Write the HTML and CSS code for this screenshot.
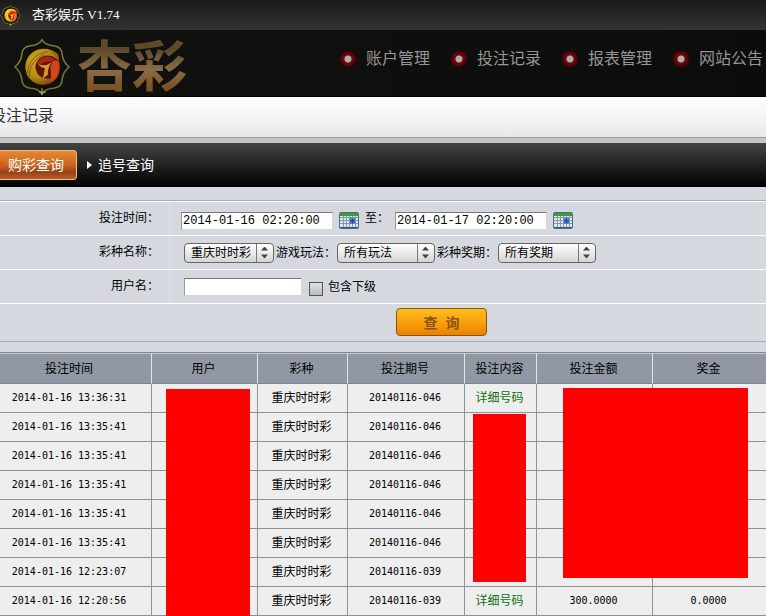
FILE: index.html
```html
<!DOCTYPE html>
<html lang="zh-CN">
<head>
  <meta charset="UTF-8" />
  <meta name="viewport" content="width=device-width, initial-scale=1.0" />
  <title>杏彩娱乐 V1.74</title>
  <link rel="stylesheet" href="styles.css">
</head>
<body>
  <svg class="defs" width="0" height="0" aria-hidden="true">
    <defs>
      <radialGradient id="gold" cx="35%" cy="35%" r="75%">
        <stop offset="0" stop-color="#d0a81c" />
        <stop offset="0.6" stop-color="#b08a14" />
        <stop offset="1" stop-color="#7a3608" />
      </radialGradient>
      <linearGradient id="frame" x1="0" y1="0" x2="0" y2="1">
        <stop offset="0" stop-color="#7d7a40" />
        <stop offset="1" stop-color="#6e7040" />
      </linearGradient>
      <symbol id="emblem" viewBox="0 0 60 60">
        <path d="M30 2 Q34 8 42 8 Q51 9 51 18 Q52 25 58 30 Q52 35 51 42 Q51 51 42 52 Q34 52 30 58 Q26 52 18 52 Q9 51 9 42 Q8 35 2 30 Q8 25 9 18 Q9 9 18 8 Q26 8 30 2Z" fill="#11110a" stroke="url(#frame)" stroke-width="1.6" />
        <circle cx="31" cy="30" r="18" fill="#5c1408" />
        <path d="M47 17 C38 8 21 9 15 21 C8 35 19 51 34 48 C41 47 45 43 46 39 C38 45 26 42 24 34 C21 25 28 18 36 18 C41 18 45 21 48 25Z" fill="url(#gold)" />
        <path d="M15 36 C15 26 23 16 36 14 M17 40 C16 30 23 20 33 17" fill="none" stroke="#6e4a0c" stroke-width="0.8" />
        <path d="M24 26 C29 19 39 17 43 22 C40 25 36 25 32 25 C30 27 27 28 24 26Z" fill="#a8260c" />
        <path d="M41 24 C46 21 49 26 48 32 C48 39 43 44 38 45 C41 39 38 34 39 29Z" fill="#d0481a" />
        <path d="M26 27 Q33 30 40 25 Q36 30 36 38 L31 42 L33 31 Q29 31 26 27Z" fill="#d89a24" />
        <path d="M30 52 V59 M27 56 H34" stroke="#c0b278" stroke-width="1" />
      </symbol>
      <symbol id="calendar" viewBox="0 0 20 17">
        <rect x="0.5" y="0.5" width="19" height="16" rx="1" fill="#dfe7ef" stroke="#4f6d84" />
        <rect x="1" y="1" width="18" height="3" fill="#3f9a35" />
        <path d="M1 5.5H19M1 8.5H19M1 11.5H19M4.500 4V15M7.500 4V15M10.500 4V15M13.500 4V15M16.500 4V15" stroke="#8499ab" />
        <path d="M11 6H16V12H11Z" fill="#4f7ccc" />
        <path d="M11 9H16M13.500 7V11" stroke="#173e96" />
        <path d="M1 15.500H19" stroke="#345b73" />
      </symbol>
    </defs>
  </svg>

  <div class="titlebar">
    <svg class="titlebar-icon" aria-hidden="true"><use href="#emblem" /></svg>
    <span>杏彩娱乐 V1.74</span>
  </div>

  <header class="header">
    <div class="logo">
      <svg class="logo-icon" aria-hidden="true"><use href="#emblem" /></svg>
      <span class="logo-text">杏彩</span>
    </div>
    <nav class="nav">
      <a href="#">账户管理</a>
      <a href="#">投注记录</a>
      <a href="#">报表管理</a>
      <a href="#">网站公告</a>
    </nav>
  </header>

  <h1 class="page-title">投注记录</h1>

  <div class="tabs">
    <a href="#" class="tab active">购彩查询</a>
    <a href="#" class="tab">追号查询</a>
  </div>

  <form class="search">
    <div class="row">
      <label class="name" for="start">投注时间：</label>
      <div class="fields dates">
        <input class="date" type="text" id="start" value="2014-01-16 02:20:00" />
        <svg class="calendar" aria-hidden="true"><use href="#calendar" /></svg>
        <label class="to" for="end">至：</label>
        <input class="date" type="text" id="end" value="2014-01-17 02:20:00" />
        <svg class="calendar" aria-hidden="true"><use href="#calendar" /></svg>
      </div>
    </div>
    <div class="row">
      <label class="name" for="lottery">彩种名称：</label>
      <div class="fields">
        <span class="select short"><select id="lottery"><option>重庆时时彩</option></select></span>
        <label class="inline" for="method">游戏玩法：</label>
        <span class="select"><select id="method"><option>所有玩法</option></select></span>
        <label class="inline" for="issue">彩种奖期：</label>
        <span class="select"><select id="issue"><option>所有奖期</option></select></span>
      </div>
    </div>
    <div class="row">
      <label class="name" for="username">用户名：</label>
      <div class="fields">
        <input class="username" type="text" id="username" />
        <input class="check" type="checkbox" id="sub" />
        <label for="sub">包含下级</label>
      </div>
    </div>
    <div class="actions">
      <button type="submit" class="submit-btn">查&nbsp;&nbsp;询</button>
    </div>
  </form>

  <table class="records">
    <colgroup>
      <col class="col-time"><col class="col-user"><col class="col-lottery"><col class="col-issue"><col class="col-detail"><col class="col-amount"><col>
    </colgroup>
    <thead>
      <tr><th>投注时间</th><th>用户</th><th>彩种</th><th>投注期号</th><th>投注内容</th><th>投注金额</th><th>奖金</th></tr>
    </thead>
    <tbody>
      <tr>
        <td class="num">2014-01-16 13:36:31</td>
        <td class="covered"><span class="mask mask-user"></span></td>
        <td>重庆时时彩</td>
        <td class="num">20140116-046</td>
        <td><a href="#">详细号码</a></td>
        <td class="covered"><span class="mask mask-amount"></span></td>
        <td></td>
      </tr>
      <tr>
        <td class="num">2014-01-16 13:35:41</td>
        <td></td>
        <td>重庆时时彩</td>
        <td class="num">20140116-046</td>
        <td class="covered"><span class="mask mask-detail"></span></td>
        <td></td>
        <td></td>
      </tr>
      <tr><td class="num">2014-01-16 13:35:41</td><td></td><td>重庆时时彩</td><td class="num">20140116-046</td><td></td><td></td><td></td></tr>
      <tr><td class="num">2014-01-16 13:35:41</td><td></td><td>重庆时时彩</td><td class="num">20140116-046</td><td></td><td></td><td></td></tr>
      <tr><td class="num">2014-01-16 13:35:41</td><td></td><td>重庆时时彩</td><td class="num">20140116-046</td><td></td><td></td><td></td></tr>
      <tr><td class="num">2014-01-16 13:35:41</td><td></td><td>重庆时时彩</td><td class="num">20140116-046</td><td></td><td></td><td></td></tr>
      <tr><td class="num">2014-01-16 12:23:07</td><td></td><td>重庆时时彩</td><td class="num">20140116-039</td><td></td><td></td><td></td></tr>
      <tr>
        <td class="num">2014-01-16 12:20:56</td>
        <td></td>
        <td>重庆时时彩</td>
        <td class="num">20140116-039</td>
        <td><a href="#">详细号码</a></td>
        <td class="num">300.0000</td>
        <td class="num">0.0000</td>
      </tr>
    </tbody>
  </table>
</body>
</html>
```

FILE: styles.css
```css
* {
  box-sizing: border-box;
}

body {
  margin: 0;
  background-color: #d5d8df;
  color: #000;
  font-family: "Liberation Sans", "Noto Sans CJK SC", sans-serif;
  font-size: 12px;
  line-height: 16px;
  overflow-x: hidden;
}

a {
  text-decoration: none;
}

.defs {
  display: block;
}

.titlebar {
  display: flex;
  align-items: center;
  gap: 11px;
  height: 30px;
  background: linear-gradient(#1a1a1a, #333);
  color: #fff;
  font-family: "Liberation Serif", "Noto Sans CJK SC", serif;
  font-size: 13px;
}

.titlebar-icon {
  width: 21px;
  height: 21px;
  filter: brightness(1.4);
}

.header {
  display: flex;
  justify-content: space-between;
  align-items: center;
  height: 67px;
  padding: 0 3px 0 12px;
  background: linear-gradient(90deg, #11110f, #0c0c0c);
  border-bottom: 1px solid #000;
}

.logo {
  display: flex;
  align-items: center;
  gap: 5px;
  padding-top: 8px;
}

.logo-icon {
  width: 60px;
  height: 58px;
}

.logo-text {
  font-size: 55px;
  font-weight: bold;
  line-height: 58px;
  background: linear-gradient(#5c4a2a 20%, #8c6b47 55%, #7a5424 85%);
  background-clip: text;
  -webkit-background-clip: text;
  color: transparent;
}

.nav {
  display: flex;
  gap: 20px;
  padding-bottom: 8px;
}

.nav a {
  display: flex;
  align-items: center;
  gap: 9px;
  color: #969696;
  font-size: 16px;
  line-height: 20px;
  white-space: nowrap;
}

.nav a::before {
  content: "";
  width: 18px;
  height: 18px;
  border-radius: 50%;
  background: radial-gradient(circle, #b8a8a8 0 3px, #6e0a10 4px, #4d0508 7px, #1c0606 9px);
}

.page-title {
  height: 41px;
  margin: 0 0 0 -10px;
  padding-top: 9px;
  background: linear-gradient(#fff, #e8e8e8);
  border-bottom: 1px solid #999;
  color: #333;
  font-size: 16px;
  font-weight: normal;
  line-height: 20px;
}

.tabs {
  display: flex;
  align-items: center;
  gap: 10px;
  height: 49px;
  border-top: 5px solid #c6c6c6;
  background: linear-gradient(#444, #000);
}

.tab {
  display: flex;
  align-items: center;
  gap: 6px;
  color: #fff;
  font-size: 14px;
  line-height: 20px;
}

.tab::before {
  content: "";
  border: 4px solid transparent;
  border-left: 5px solid #fff;
  border-right: 0;
}

.tab.active {
  height: 30px;
  padding-right: 12px;
  gap: 3px;
  border: 1px solid #f5bd80;
  border-left: 0;
  border-radius: 0 4px 4px 0;
  background: linear-gradient(#e58a30, #c96620 50%, #97431a 75%, #b85c20);
}

.tab.active::before {
  border-left-color: #e2501a;
}

.search {
  margin: 13px 0 10px;
  border-top: 1px solid #a5acb7;
  border-bottom: 1px solid #a5acb7;
}

.row {
  display: flex;
  height: 34px;
  border-top: 1px solid #fff;
}

.name {
  width: 172px;
  padding: 8px 9px 0 0;
  border-right: 4px solid #d9dbe3;
  text-align: right;
}

.fields {
  display: flex;
  align-items: center;
  padding-left: 12px;
  white-space: nowrap;
}

.dates {
  padding: 4px 0 0 9px;
}

.search input[type="text"] {
  height: 18px;
  margin: 0;
  padding: 0 1px;
  border: 1px solid #d5d5d5;
  border-top-color: #777;
  border-left-color: #999;
  background-color: #fff;
  font-family: "Liberation Mono", monospace;
  font-size: 12px;
}

.search .date {
  width: 152px;
}

.search .username {
  width: 118px;
}

.calendar {
  width: 20px;
  height: 17px;
  margin-left: 6px;
}

.to {
  width: 36px;
  padding: 0 0 6px 6px;
}

.select {
  position: relative;
  width: 98px;
  height: 20px;
}

.select.short {
  width: 90px;
}

.select select {
  appearance: none;
  width: 100%;
  height: 20px;
  margin: 0;
  padding: 0 0 0 6px;
  border: 1px solid #666;
  border-radius: 4px;
  background: linear-gradient(#fff, #d5d5d5);
  color: #000;
  font: inherit;
}

/* divider and the two arrows */
.select::before {
  content: "";
  position: absolute;
  top: 1px;
  right: 17px;
  height: 18px;
  border-left: 1px solid #777;
  pointer-events: none;
}

.select::after {
  content: "";
  position: absolute;
  top: 4px;
  right: 6px;
  width: 7px;
  height: 12px;
  background: #444;
  clip-path: polygon(50% 0, 100% 4px, 0 4px, 0 8px, 100% 8px, 50% 100%, 0 8px, 0 4px);
  pointer-events: none;
}

.inline {
  width: 63px;
  padding-left: 2px;
}

.check {
  appearance: none;
  width: 14px;
  height: 14px;
  margin: 4px 5px 0 7px;
  border: 1px solid #555;
  background: linear-gradient(#e0e0e4, #bbb);
}

.check:checked {
  background: #555;
}

.actions {
  display: flex;
  justify-content: center;
  height: 38px;
  padding: 4px 0 0 117px;
  border-top: 1px solid #fff;
}

.submit-btn {
  width: 91px;
  height: 28px;
  padding: 0;
  border: 1px solid #8e5408;
  border-radius: 4px;
  background: linear-gradient(#fcc01f, #f9a10e 50%, #ec8100);
  color: #8a5508;
  font-family: inherit;
  font-size: 14px;
  font-weight: bold;
  cursor: pointer;
}

.records {
  width: 100%;
  table-layout: fixed;
  border-collapse: separate;
  border-spacing: 0;
  border-top: 1px solid #7e8794;
  background-color: #eee;
  text-align: center;
}

.col-time { width: 152px; }
.col-user { width: 106px; }
.col-lottery { width: 90px; }
.col-issue { width: 117px; }
.col-detail { width: 72px; }
.col-amount { width: 116px; }

.records th {
  height: 31px;
  padding: 0 2px 0 0;
  border-top: 1px solid #c5cad1;
  border-right: 1px solid #e3e5e9;
  border-bottom: 1px solid #7e8794;
  background-color: #9198a3;
  font-weight: normal;
}

.records td {
  height: 29px;
  padding: 0 2px 0 0;
  border-right: 1px solid #8e9299;
  border-bottom: 1px solid #8e9299;
}

.records th:first-child,
.records td:first-child {
  padding-right: 13px;
}

.records th:last-child,
.records td:last-child {
  border-right: 0;
}

.records a {
  color: #107010;
}

.records .num {
  font-family: "DejaVu Sans Mono", monospace;
  font-size: 10px;
}

.covered {
  position: relative;
}

.mask {
  position: absolute;
  z-index: 1;
  background-color: #f00;
}

.mask-user {
  top: 5px;
  left: 14px;
  width: 84px;
  height: 227px;
}

.mask-detail {
  top: 1px;
  left: 8px;
  width: 53px;
  height: 168px;
}

.mask-amount {
  top: 4px;
  left: 26px;
  width: 185px;
  height: 190px;
}
```
